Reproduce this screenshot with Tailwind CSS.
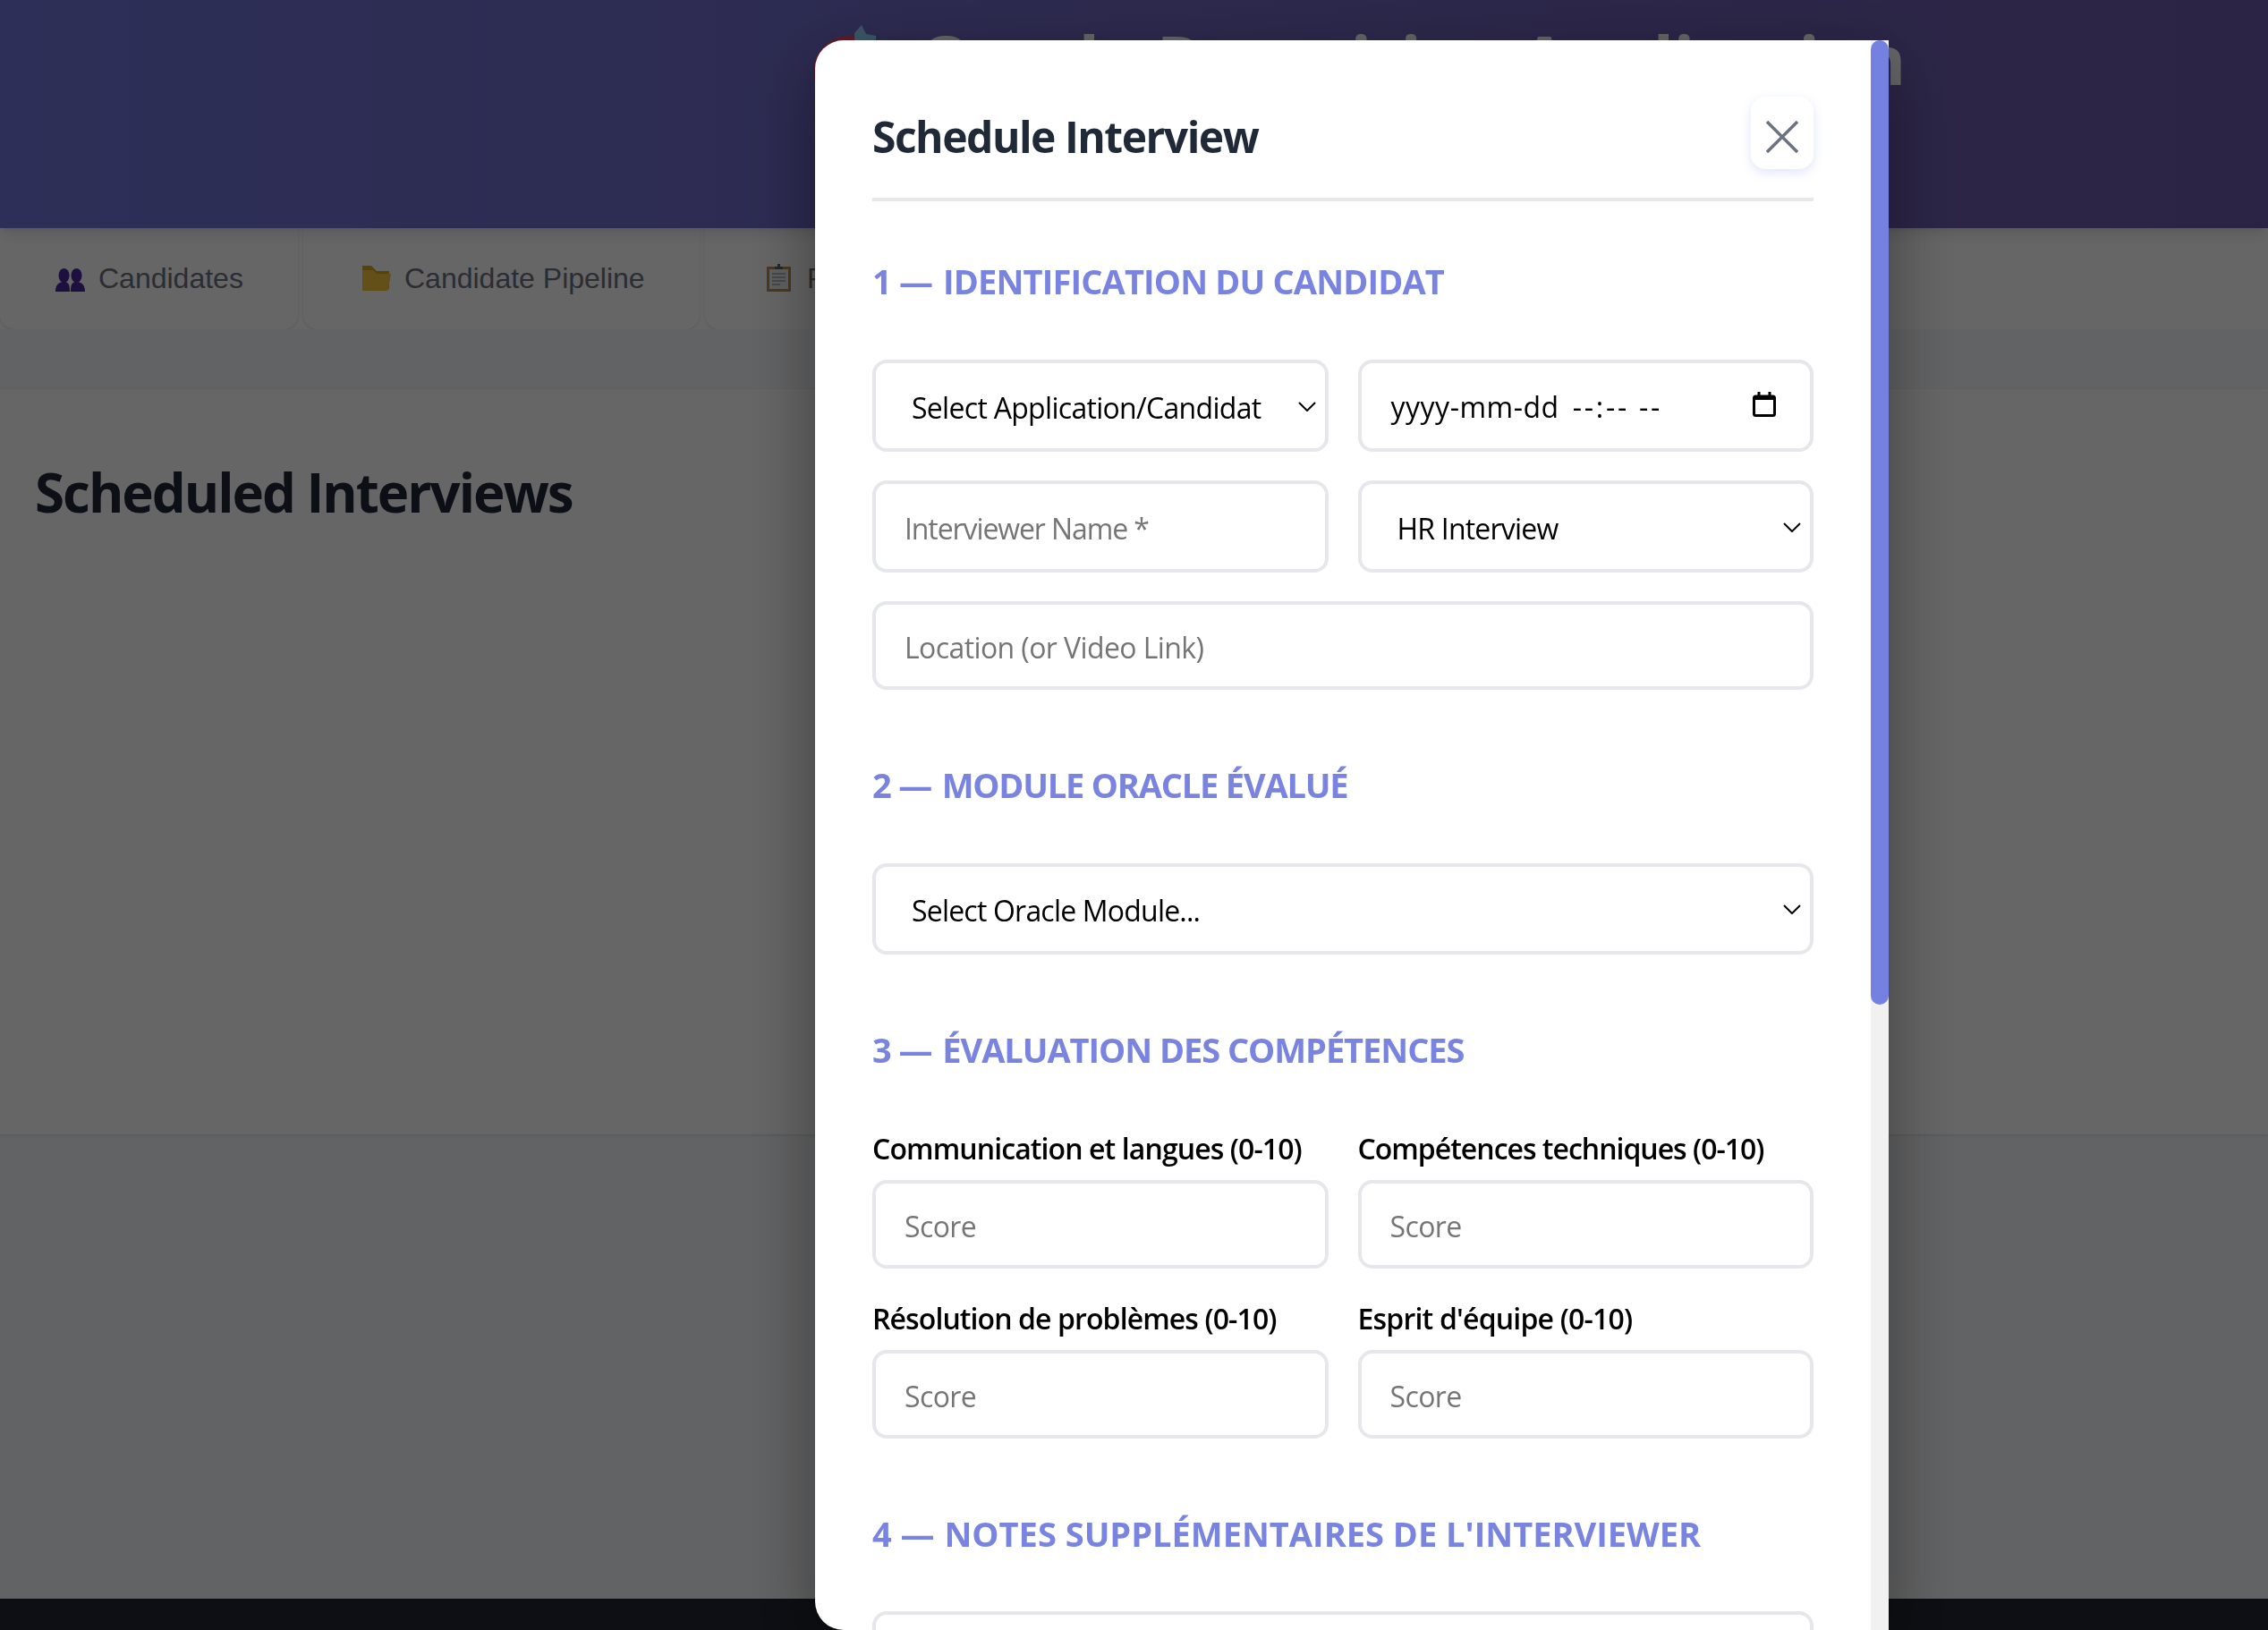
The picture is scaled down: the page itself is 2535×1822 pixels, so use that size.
<!DOCTYPE html>
<html lang="en">
<head>
    <meta charset="UTF-8">
    <meta name="viewport" content="width=device-width, initial-scale=1.0">
    <title>Oracle Recruiting Application</title>
    <script src="https://cdn.jsdelivr.net/npm/@tailwindcss/browser@4"></script>
</head>
<body class="font-['Liberation_Sans',sans-serif] bg-[#f5f7fa] overflow-hidden">
    <div class="h-[1822px] flex flex-col overflow-hidden">
        <!-- Header -->
        <header class="relative z-10 h-[255px] shrink-0 bg-linear-to-r from-[#7076dc] to-[#6e5aaa] shadow-lg flex pl-[905px] pt-[16px]">
            <h1 class="flex items-center h-[100px] text-white text-[76px] font-bold tracking-[-0.3px] font-['Open_Sans',sans-serif] whitespace-nowrap">
                <svg width="100" height="100" viewBox="0 0 100 100" class="shrink-0 mr-[22px]">
                    <circle cx="44" cy="64" r="40" fill="#f04060"/>
                    <path d="M58 12l5 10 11 2v6H50v-9z" fill="#96d8ff"/>
                </svg>
                Oracle Recruiting Application
            </h1>
        </header>

        <!-- Tabs -->
        <nav class="h-[113px] shrink-0 flex gap-[6px] bg-white text-[32px] text-[#6b7280]">
            <a class="w-[333px] pb-[2px] rounded-b-2xl bg-white shadow-sm flex items-center gap-[15px] pl-[62px]">
                <svg width="33" height="26" viewBox="0 0 33 26" fill="#4c2a9c" class="mt-[5px]">
                    <ellipse cx="9.5" cy="8" rx="6" ry="8"/><ellipse cx="23.5" cy="8" rx="6" ry="8"/>
                    <path d="M0 26c0-7 3-10 8-11h3c4 1 5 4 5 11zM17 26c0-7 1-10 5-11h3c5 1 8 4 8 11z"/>
                </svg>
                Candidates
            </a>
            <a class="w-[443px] pb-[2px] rounded-b-2xl bg-white shadow-sm flex items-center gap-[15px] pl-[66px]">
                <svg width="32" height="28" viewBox="0 0 32 28" class="shrink-0">
                    <path d="M0 0h10l6 6h14v20H0z" fill="#d9a520"/>
                    <path d="M0 28V5h12l4 4h16l-3 17a2 2 0 0 1-2 2z" fill="#f8c63e"/>
                </svg>
                Candidate Pipeline
            </a>
            <a class="w-[443px] pb-[2px] rounded-b-2xl bg-white shadow-sm flex items-center gap-[18px] pl-[69px]">
                <svg width="27" height="31" viewBox="0 0 27 31" class="shrink-0">
                    <rect x="0" y="3" width="27" height="28" rx="1" fill="#c98a4b"/>
                    <rect x="3" y="6" width="21" height="22" fill="#eef0f2"/>
                    <path d="M9 6V3h3V0h3v3h3v3z" fill="#5f6368"/>
                    <path d="M6 11h15M6 15h15M6 19h15M6 23h9" stroke="#9ca3af" stroke-width="1.5"/>
                </svg>
                Planning
            </a>
        </nav>

        <!-- Main -->
        <main class="flex-1 bg-[#f5f7fa] pt-[67px]">
            <section class="h-[833px] bg-white shadow-sm px-[39px] pt-[75px]">
                <h2 class="text-[60px] leading-[80px] font-bold tracking-[-2px] text-[#1f2937] font-['Open_Sans',sans-serif]">Scheduled Interviews</h2>
            </section>
        </main>

        <footer class="h-[35px] shrink-0 bg-[#212632]"></footer>
    </div>

    <!-- Modal -->
    <div class="fixed inset-0 z-20 bg-black/60 flex items-start pt-[45px] pl-[911px]">
        <div class="w-[1200px] h-[1777px] bg-white rounded-l-[32px] shadow-[0_25px_80px_rgba(0,0,0,0.4)] flex font-['Open_Sans',sans-serif]">
            <div class="flex-1 h-full overflow-hidden pl-[64px] pr-[64px] pt-[63px]">
                <div class="flex items-start justify-between pb-[32px] border-b-4 border-[#e5e7eb]">
                    <h2 class="mt-[12px] text-[48px] leading-[65px] font-bold tracking-[-1.5px] text-[#1f2937]">Schedule Interview</h2>
                    <button class="w-[70px] h-[81px] rounded-2xl bg-white shadow-[0_4px_12px_rgba(102,126,234,0.2)] flex items-center justify-center text-[#6b7280]">
                        <svg width="36" height="36" viewBox="0 0 36 36" fill="none" stroke="currentColor" stroke-width="3.5" class="mt-[8px]">
                            <path d="M1 1l34 34M35 1L1 35"/>
                        </svg>
                    </button>
                </div>

                <h3 class="mt-[64px] text-[38px] leading-[50px] font-bold tracking-[-0.85px] text-[#7984e0] uppercase"><span class="mr-[3px]">1 —</span> Identification du candidat</h3>
                <div class="mt-[63px] grid grid-cols-2 gap-x-[33px] gap-y-[32px]">
                    <div class="relative h-[103px]">
                        <select class="w-full h-full appearance-none pl-[40px] pt-[4px] border-4 border-[#e5e7eb] rounded-2xl text-[32px] tracking-[-0.7px] bg-white">
                            <option>Select Application/Candidat</option>
                        </select>
                        <svg class="absolute right-[14px] top-[47px] pointer-events-none" width="20" height="11" viewBox="0 0 20 11" fill="none" stroke="#000" stroke-width="2"><path d="M1 1l9 9 9-9"/></svg>
                    </div>
                    <div class="h-[103px] pl-[33px] pr-[38px] border-4 border-[#e5e7eb] rounded-2xl flex items-center justify-between">
                        <div class="flex pt-[3px] text-[32px] text-black">
                            <span class="tracking-[0.5px]">yyyy-mm-dd</span>
                            <span class="ml-[15px] tracking-[2.75px]">--:-- --</span>
                        </div>
                        <svg width="26" height="28" viewBox="0 0 26 28" fill="none" stroke="#000" class="shrink-0 -mt-[4px]">
                            <rect x="1.5" y="5" width="23" height="21.5" rx="2" stroke-width="3"/>
                            <path d="M1.5 7h23" stroke-width="4"/>
                            <path d="M7 0v4M19 0v4" stroke-width="3"/>
                        </svg>
                    </div>
                    <input placeholder="Interviewer Name *" class="h-[103px] px-[32px] pt-[4px] border-4 border-[#e5e7eb] rounded-2xl text-[32px] tracking-[-1.1px] outline-none placeholder:text-[#757575]">
                    <div class="relative h-[103px]">
                        <select class="w-full h-full appearance-none pl-[40px] pt-[4px] border-4 border-[#e5e7eb] rounded-2xl text-[32px] tracking-[-0.8px] bg-white">
                            <option>HR Interview</option>
                        </select>
                        <svg class="absolute right-[14px] top-[47px] pointer-events-none" width="20" height="11" viewBox="0 0 20 11" fill="none" stroke="#000" stroke-width="2"><path d="M1 1l9 9 9-9"/></svg>
                    </div>
                    <input placeholder="Location (or Video Link)" class="col-span-2 h-[99px] px-[32px] pt-[4px] border-4 border-[#e5e7eb] rounded-2xl text-[32px] tracking-[-0.6px] outline-none placeholder:text-[#757575]">
                </div>

                <h3 class="mt-[81px] text-[38px] leading-[50px] font-bold tracking-[-1.2px] text-[#7984e0] uppercase"><span class="mr-[3px]">2 —</span> Module Oracle évalué</h3>
                <div class="relative mt-[63px] h-[102px]">
                    <select class="w-full h-full appearance-none pl-[40px] pt-[4px] border-4 border-[#e5e7eb] rounded-2xl text-[32px] tracking-[-0.8px] bg-white">
                        <option>Select Oracle Module...</option>
                    </select>
                    <svg class="absolute right-[14px] top-[46px] pointer-events-none" width="20" height="11" viewBox="0 0 20 11" fill="none" stroke="#000" stroke-width="2"><path d="M1 1l9 9 9-9"/></svg>
                </div>

                <h3 class="mt-[81px] text-[38px] leading-[50px] font-bold tracking-[-1.05px] text-[#7984e0] uppercase"><span class="mr-[3px]">3 —</span> Évaluation des compétences</h3>
                <div class="mt-[64px] grid grid-cols-2 gap-x-[33px] gap-y-[34px]">
                    <label class="block text-[32px] leading-[44px] font-semibold tracking-[-0.9px] text-black">Communication et langues (0-10)
                        <input placeholder="Score" class="mt-[13px] w-full h-[99px] px-[32px] pt-[4px] border-4 border-[#e5e7eb] rounded-2xl font-normal tracking-[-0.6px] outline-none placeholder:text-[#757575]">
                    </label>
                    <label class="block text-[32px] leading-[44px] font-semibold tracking-[-1px] text-black">Compétences techniques (0-10)
                        <input placeholder="Score" class="mt-[13px] w-full h-[99px] px-[32px] pt-[4px] border-4 border-[#e5e7eb] rounded-2xl font-normal tracking-[-0.6px] outline-none placeholder:text-[#757575]">
                    </label>
                    <label class="block text-[32px] leading-[44px] font-semibold tracking-[-0.9px] text-black">Résolution de problèmes (0-10)
                        <input placeholder="Score" class="mt-[13px] w-full h-[99px] px-[32px] pt-[4px] border-4 border-[#e5e7eb] rounded-2xl font-normal tracking-[-0.6px] outline-none placeholder:text-[#757575]">
                    </label>
                    <label class="block text-[32px] leading-[44px] font-semibold tracking-[-0.8px] text-black">Esprit d'équipe (0-10)
                        <input placeholder="Score" class="mt-[13px] w-full h-[99px] px-[32px] pt-[4px] border-4 border-[#e5e7eb] rounded-2xl font-normal tracking-[-0.6px] outline-none placeholder:text-[#757575]">
                    </label>
                </div>

                <h3 class="mt-[81px] text-[38px] leading-[50px] font-bold tracking-[0px] text-[#7984e0] uppercase"><span class="mr-[1px]">4 —</span> Notes supplémentaires de l'interviewer</h3>
                <textarea class="mt-[62px] w-full h-[240px] block px-[32px] py-[24px] border-4 border-[#e5e7eb] rounded-2xl text-[32px] outline-none"></textarea>
            </div>
            <!-- Scrollbar -->
            <div class="w-5 h-full shrink-0 bg-[#f1f1f1]">
                <div class="h-[1078px] bg-[#7481e0] rounded-[10px]"></div>
            </div>
        </div>
    </div>
</body>
</html>
